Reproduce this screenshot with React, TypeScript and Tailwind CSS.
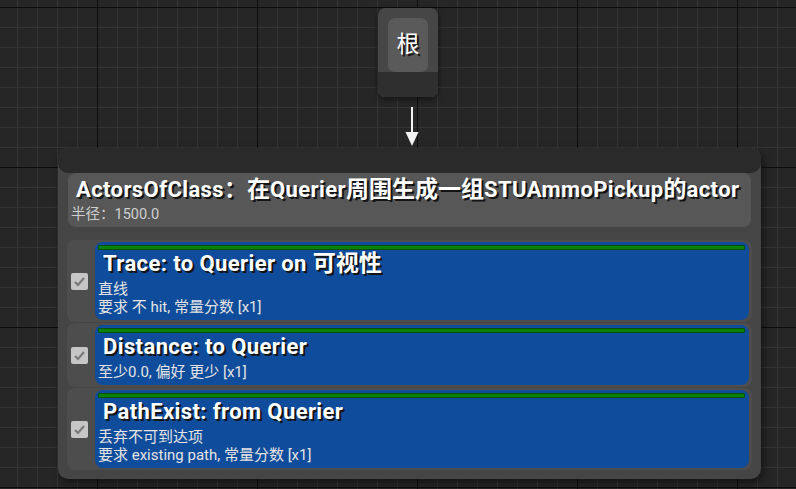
import React from 'react';

// Datos de las pruebas del nodo de generación
interface Prueba {
  id: string;
  titulo: string;
  lineas: string[];
}

const pruebas: Prueba[] = [
  { id: 'trace', titulo: 'Trace: to Querier on 可视性', lineas: ['直线', '要求 不 hit, 常量分数 [x1]'] },
  { id: 'distance', titulo: 'Distance: to Querier', lineas: ['至少0.0, 偏好 更少 [x1]'] },
  { id: 'path', titulo: 'PathExist: from Querier', lineas: ['丢弃不可到达项', '要求 existing path, 常量分数 [x1]'] },
];

const fuente = "font-['Roboto','Noto_Sans_CJK_SC',sans-serif]";
const sombra = '[text-shadow:2px_2px_0_#141414]';

// Los caracteres chinos salen algo más grandes que el latín en el editor
const Titulo = ({ texto }: { texto: string }) => (
  <>
    {texto.split(/([\u3000-\u9fff\uff00-\uffef]+)/).map((parte, i) =>
      /[\u3000-\u9fff\uff00-\uffef]/.test(parte) ? (
        parte === '：' ? (
          // el editor centra los dos puntos en su celda
          <span
            key={i}
            className="inline-block w-[25px] pl-[8px] overflow-hidden align-top text-[23px] leading-[24px] tracking-normal"
          >
            {parte}
          </span>
        ) : (
          <span key={i} className="text-[23px] leading-[24px] tracking-normal">
            {parte}
          </span>
        )
      ) : (
        <span key={i}>{parte}</span>
      ),
    )}
  </>
);

// Rejilla del editor (fondo del lienzo)
const Rejilla = () => (
  <svg className="absolute inset-0" width="796" height="489">
    <defs>
      <pattern id="menor" x="17" y="7" width="20" height="20" patternUnits="userSpaceOnUse">
        <path d="M0 0.5H20M0.5 0V20" stroke="#343434" strokeWidth="1" />
      </pattern>
      <pattern id="mayor" x="97" y="7" width="160" height="160" patternUnits="userSpaceOnUse">
        <path d="M0 0.5H160M0.5 0V160" stroke="#0d0d0d" strokeWidth="1" />
      </pattern>
    </defs>
    <rect width="796" height="489" fill="#262626" />
    <rect width="796" height="489" fill="url(#menor)" />
    <rect width="796" height="489" fill="url(#mayor)" />
  </svg>
);

const Casilla = () => (
  <div className="w-[17px] h-[17px] shrink-0 rounded-[2px] bg-[#c6c6c6] flex items-center justify-center">
    <svg width="13" height="13" viewBox="0 0 13 13">
      <path d="M2 7l3 3 6-7" fill="none" stroke="#7a7a7a" strokeWidth="2.2" />
    </svg>
  </div>
);

const TarjetaPrueba = ({ prueba }: { prueba: Prueba }) => (
  <div className="flex items-center rounded-[8px] bg-[#4d4d4d] pt-[2px] pb-[2px] pl-[4px] pr-[3px]">
    <Casilla />
    <div className="ml-[7px] flex-1 rounded-[8px] bg-[#0f4c9b] px-[3px] pt-[3px] pb-[4px]">
      <div className="h-[5px] rounded-[1px] bg-[#0a820a] border border-[#055205] mr-[1px]" />
      <div
        className={`mt-[2px] pl-[5px] text-[22px] leading-[24px] tracking-[0.4px] font-bold text-white whitespace-nowrap ${sombra}`}
      >
        <Titulo texto={prueba.titulo} />
      </div>
      <div className="mt-[4px] text-[15px] leading-[18px] text-[#e4e4e4] whitespace-nowrap">
        {prueba.lineas.map((l) => (
          <div key={l}>{l}</div>
        ))}
      </div>
    </div>
  </div>
);

export default function App() {
  return (
    <div className={`relative w-[796px] h-[489px] overflow-hidden bg-[#262626] ${fuente}`}>
      <Rejilla />

      {/* nodo raíz */}
      <div className="absolute left-[378px] top-[8px] w-[60px] h-[89px] rounded-[7px] bg-[#464646] shadow-[0_2px_6px_rgba(0,0,0,0.5)] flex flex-col overflow-hidden">
        <div className="flex-1 px-[10px] pt-[10px]">
          <div
            className={`h-[54px] rounded-[7px] bg-[#5a5a5a] flex items-center justify-center text-[23px] text-white ${sombra}`}
          >
            根
          </div>
        </div>
        <div className="h-[25px] bg-[#2f2f2f]" />
      </div>

      {/* flecha */}
      <svg className="absolute left-[404px] top-[106px]" width="16" height="41" viewBox="0 0 16 41">
        <path d="M8 1V28" stroke="#f2f2f2" strokeWidth="2" />
        <path d="M1.5 26L8 40L14.5 26Z" fill="#f2f2f2" />
      </svg>

      {/* nodo de generación */}
      <div className="absolute left-[58px] top-[148px] w-[703px] rounded-[10px] bg-[#454545] shadow-[2px_4px_8px_rgba(0,0,0,0.5)]">
        <div className="h-[25px] rounded-[10px] bg-[#2a2a2a]" />
        <div className="px-[9px] pb-[9px]">
          <div className="mx-[1px] rounded-[8px] bg-[#575757] pt-[5px] pb-[3px]">
            <div
              className={`pl-[8px] text-[22px] leading-[24px] tracking-[0.4px] font-bold text-white whitespace-nowrap ${sombra}`}
            >
              <Titulo texto="ActorsOfClass：在Querier周围生成一组STUAmmoPickup的actor" />
            </div>
            <div className="mt-[4px] pl-[3px] text-[14.5px] leading-[18px] text-[#cfcfcf]">半径：1500.0</div>
          </div>
          <div className="mt-[13px] flex flex-col gap-[1px]">
            {pruebas.map((p) => (
              <TarjetaPrueba key={p.id} prueba={p} />
            ))}
          </div>
        </div>
      </div>
    </div>
  );
}
